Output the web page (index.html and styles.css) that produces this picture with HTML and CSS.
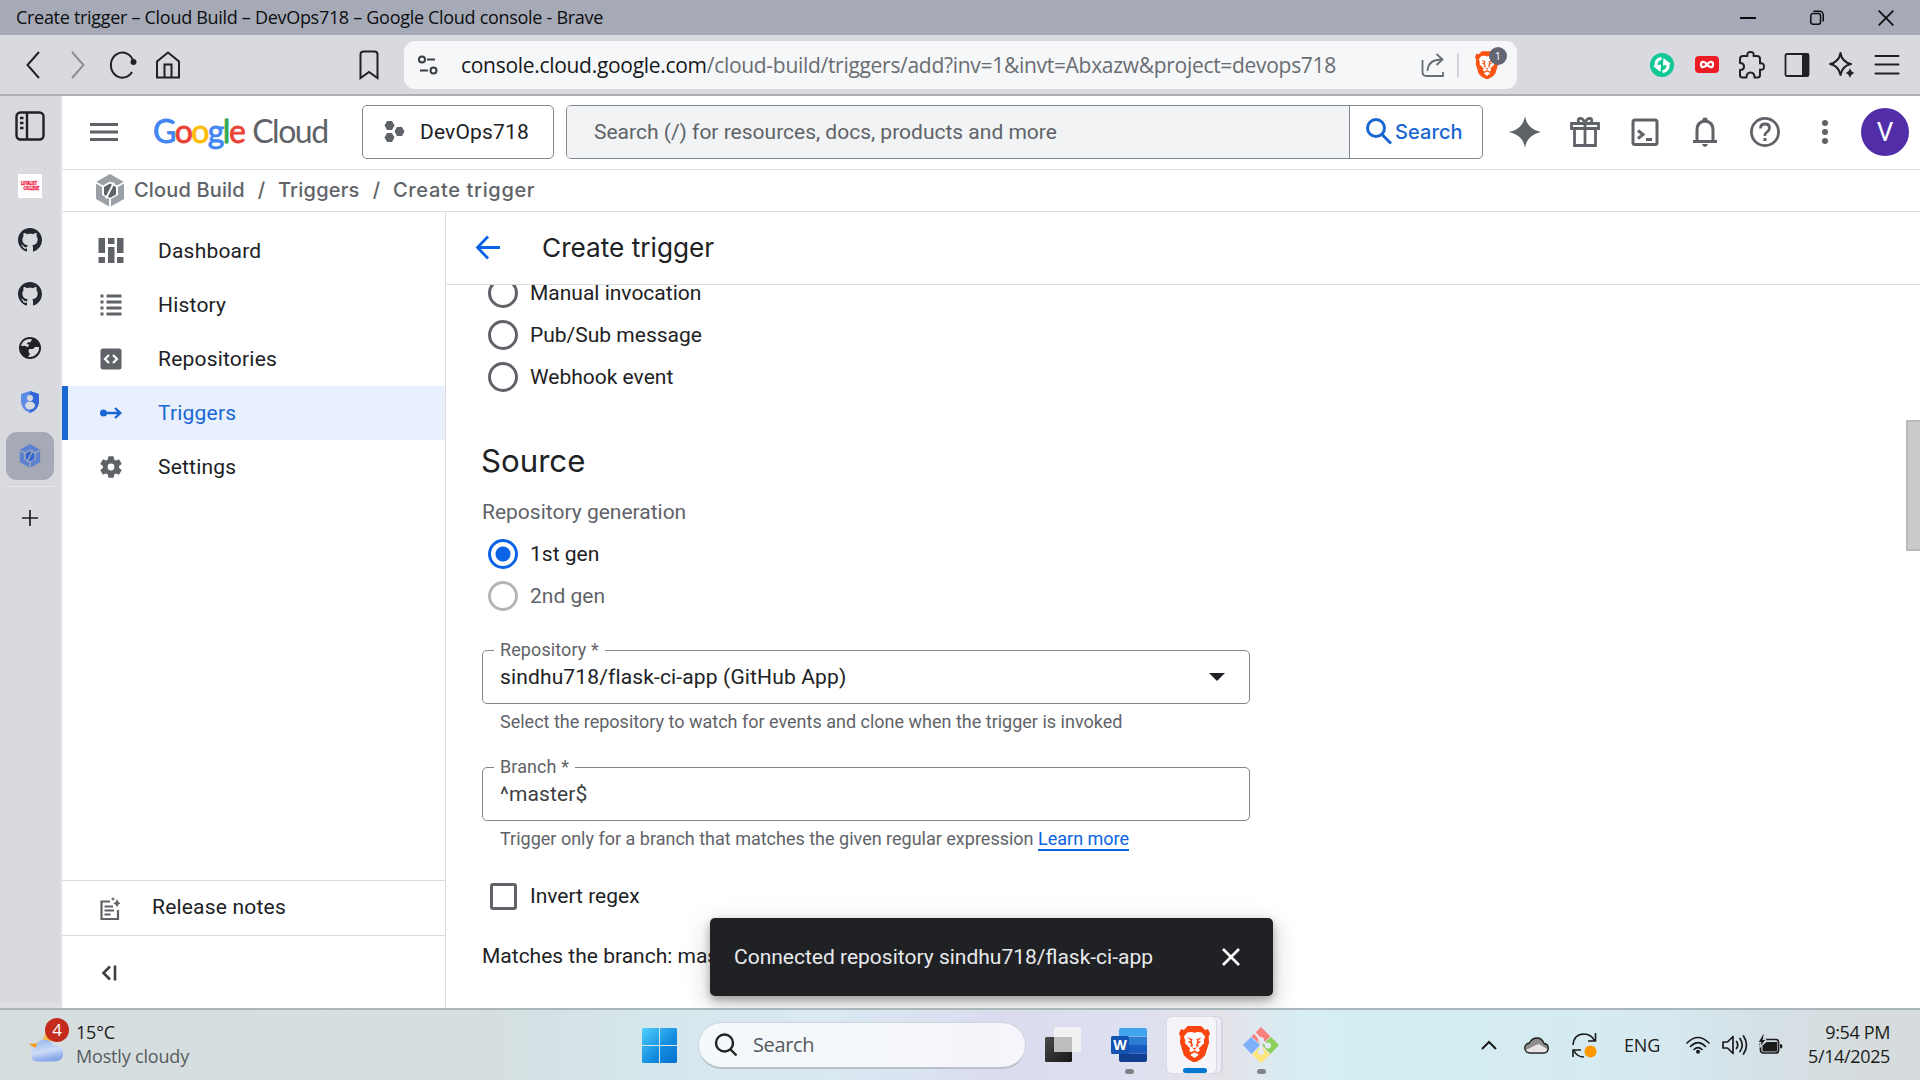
FILE: index.html
```html
<!DOCTYPE html>
<html lang="en">
<head>
<meta charset="utf-8">
<title>Create trigger – Cloud Build – DevOps718 – Google Cloud console</title>
<link rel="stylesheet" href="styles.css">
</head>
<body>
<svg class="defs" aria-hidden="true">
  <symbol id="lion" viewBox="0 0 32 37">
    <path d="M9 0h14l4 4 3-1 2 5-1.500 3 .5 6-4 13-4 4-7 4-7-4-4-4-4-13 .5-6L0 8l2-5 3 1z"/>
    <path fill="#fff" d="M16 7l3-1 4.500.5L27 11l-1.500 3.500.5 3-5.500 5.500 1 2.500-2 1.500-3.500-2-3.500 2-2-1.500 1-2.500L6 17.500l.5-3L5 11l3.500-4.500L13 6z"/>
    <path fill="currentColor" d="M8.500 11.500l5.500 2-.8 2.500 1.300 4.500-3 1 1-3-3.500-2.500 3.500-.5zM23.500 11.500l-5.500 2 .8 2.500-1.300 4.500 3 1-1-3 3.500-2.500-3.500-.5zM13 21.500l3 1.300 3-1.300-3 3.200z"/>
    <path fill="#fff" d="M16 27l4.500 2.500L16 33l-4.500-3.500z"/>
  </symbol>
  <symbol id="github" viewBox="0 0 16 16"><path d="M8 0C3.580 0 0 3.580 0 8c0 3.540 2.290 6.530 5.470 7.590.4.070.55-.17.55-.38 0-.19-.01-.82-.01-1.490-2.010.37-2.530-.49-2.690-.94-.09-.23-.48-.94-.82-1.130-.28-.15-.68-.52-.01-.53.63-.01 1.080.58 1.230.82.72 1.210 1.870.87 2.330.66.070-.52.28-.87.51-1.070-1.780-.2-3.640-.89-3.640-3.950 0-.87.31-1.590.82-2.150-.08-.2-.36-1.020.08-2.120 0 0 .67-.21 2.200.82.64-.18 1.320-.27 2-.27s1.360.09 2 .27c1.530-1.040 2.200-.82 2.200-.82.44 1.100.16 1.920.08 2.120.51.56.82 1.270.82 2.150 0 3.070-1.870 3.750-3.650 3.950.29.25.54.73.54 1.480 0 1.070-.01 1.930-.01 2.200 0 .21.15.46.55.38A8.010 8.010 0 0016 8c0-4.420-3.580-8-8-8z"/></symbol>
  <symbol id="build" viewBox="0 0 30 33">
    <path class="b-outer" d="M15 0l14 8v17l-14 8-14-8V8z"/>
    <path class="b-gap" d="M15 7.500l8 4.500v9l-8 4.500L7 21v-9z"/>
    <path class="b-inner" d="M15 9.500l6 3.500v7.500L15 24l-6-3.500V13z"/>
    <path class="b-line" fill="none" stroke-width="1.800" d="M0 8l8 4.500M30 8l-8 4.500M15 24v9M19 8.500l-8 16"/>
  </symbol>
</svg>

<header class="titlebar">
  <span class="titlebar-text">Create trigger – Cloud Build – DevOps718 – Google Cloud console - Brave</span>
  <svg class="win" viewBox="0 0 16 16"><path d="M0 8h16" stroke-width="2"/></svg>
  <svg class="win" viewBox="0 0 16 18"><rect x="1" y="4" width="11" height="12" rx="2.500"/><path d="M4 1.500h7a4 4 0 0 1 4 4V13"/></svg>
  <svg class="win" viewBox="0 0 16 16"><path d="M.7.7l14.600 14.600M15.300.7L.7 15.300"/></svg>
</header>

<div class="toolbar">
  <svg class="tb" viewBox="0 0 28 28"><path d="M20 1L8.500 14 20 27"/></svg>
  <svg class="tb tb-dim" viewBox="0 0 28 28"><path d="M8 1l11.500 13L8 27"/></svg>
  <svg class="tb" viewBox="0 0 28 28"><path d="M23 21A11.500 12.500 0 1 1 24.500 11"/><circle cx="24.500" cy="11" r="3" fill="#1f2126" stroke="none"/></svg>
  <svg class="tb" viewBox="0 0 28 28"><path d="M3 26.500V10.500L14 1.500l11 9v16zM10.500 26V13.500h7V26"/></svg>
  <svg class="tb tb-bookmark" viewBox="0 0 28 28"><path d="M5.500 3.500q0-3 3-3h11q3 0 3 3V27L14 21 5.500 27z"/></svg>
  <div class="urlbar">
    <svg class="tune" viewBox="0 0 20 20"><circle cx="4" cy="4.500" r="3"/><path d="M9 4.500h8M2 15.500h8"/><circle cx="15.500" cy="15.500" r="3"/></svg>
    <span class="url"><b>console.cloud.google.com</b>/cloud-build/triggers/add?inv=1&amp;invt=Abxazw&amp;project=devops718</span>
    <svg class="share" viewBox="0 0 24 24"><path d="M1.500 7v12q0 4 4 4H22v-4M6.500 18Q7 6.500 21 6.500M15.500 1l6 5.500-6 5.500"/></svg>
    <span class="url-divider"></span>
    <span class="shield"><svg class="lion"><use href="#lion"/></svg><span class="shield-count">1</span></span>
  </div>
  <svg class="ext ext-first" viewBox="0 0 28 28"><circle cx="14" cy="14" r="12" fill="#11c795"/><path fill="none" stroke="#fff" stroke-width="3.200" d="M13.500 7.200Q7.500 8.500 8 14.500l.8 2M14.500 20.800q6-1.300 5.500-7.300l-.8-2"/><path fill="#fff" d="M5 15l8-1.500-.5 7.500zM23 13l-8 1.500.5-7.500z"/></svg>
  <svg class="ext" viewBox="0 0 28 28"><rect x="2" y="5" width="24" height="17" rx="4" fill="#ed1c24"/><path fill="none" stroke="#fff" stroke-width="2.300" d="M14 13.500c-2-3-6-4-6 0s4 3 6 0 6-4 6 0-4 3-6 0z"/></svg>
  <svg class="ext" viewBox="0 0 28 28"><path fill="none" stroke="#1f2126" stroke-width="2" stroke-linejoin="round" d="M2 8q0-3 3-3h4.500q-1-4 3-4t3 4H19q3 0 3 3v4.500q4-1 4 3t-4 3V24q0 2.500-2.500 2.500h-3q0-5-4-5t-4 5H4.500Q2 26.500 2 24v-5q4 0 4-3.500T2 12z"/></svg>
  <svg class="ext" viewBox="0 0 28 28"><rect x="2.500" y="3" width="23" height="22" rx="1.500" fill="none" stroke="#1f2126" stroke-width="1.800"/><path fill="#1f2126" d="M19 2.500h6.500V25.500H19z"/></svg>
  <svg class="ext" viewBox="0 0 28 28"><path fill="none" stroke="#1f2126" stroke-width="2" stroke-linejoin="round" d="M12.500 2q1.500 9 10.500 11-9 2-10.500 11Q11 15 2 13 11 11 12.500 2z"/><circle cx="22" cy="22" r="6" fill="#d9dadf"/><path fill="#1f2126" d="M22 17q1 4 4.500 5-3.500 1-4.500 5-1-4-4.500-5 3.500-1 4.500-5z"/></svg>
  <svg class="ext" viewBox="0 0 28 28"><path stroke="#1f2126" stroke-width="2" stroke-linecap="round" d="M2.500 5h23M2.500 13.500h23M2.500 22.500h23"/></svg>
</div>

<div class="browser">
  <aside class="tabstrip">
    <svg class="panel-ic" viewBox="0 0 30 30"><rect x="1.500" y="1.500" width="27" height="27" rx="4"/><path d="M12 2v26M5 7h3.500M5 12h3.500M5 17h3.500"/></svg>
    <span class="tab"><svg class="t24" viewBox="0 0 24 24"><path fill="#fff" d="M0 0h24v24H0z"/><g fill="#ee2347" stroke="#ee2347" stroke-width=".3" font-family="Roboto, sans-serif" font-weight="900" font-size="5.800"><text x="3" y="11" textLength="16" lengthAdjust="spacingAndGlyphs">LOYALIST</text><text x="5.500" y="15.500" textLength="15.500" lengthAdjust="spacingAndGlyphs">COLLEGE</text></g></svg></span>
    <span class="tab"><svg class="t24 dark"><use href="#github"/></svg></span>
    <span class="tab"><svg class="t24 dark"><use href="#github"/></svg></span>
    <span class="tab"><svg class="t22" viewBox="0 0 22 22"><circle cx="11" cy="11" r="11" fill="#1f2126"/><path fill="#d9dadf" d="M2 9C3 5 6 2 11 2l2 .3-1.500 3H9l-1.500 2H10l-1 3-3-1.500zM10 12h4l2-2h4q.5 4-3 7.500-3 3-8 2.500l2-3-1.500-2z"/></svg></span>
    <span class="tab"><svg class="t22" viewBox="0 0 22 22"><path fill="#5c8be8" d="M11 0l9 3v8q-1 8-9 11-8-3-9-11V3z"/><path fill="#3367d6" d="M11 0l9 3v8q-1 8-9 11z"/><circle cx="11" cy="7" r="3" fill="#d9dadf"/><ellipse cx="11" cy="14.500" rx="5" ry="4" fill="#d9dadf"/></svg></span>
    <span class="tab tab-active"><svg class="build build-blue"><use href="#build"/></svg></span>
    <span class="tab-rule"></span>
    <svg class="plus" viewBox="0 0 16 16"><path d="M8 0v16M0 8h16"/></svg>
  </aside>

  <div class="console">
    <div class="topbar">
      <svg class="burger" viewBox="0 0 28 18"><path d="M0 1.500h28M0 9h28M0 16.500h28"/></svg>
      <div class="logo"><span class="g1">G</span><span class="g2">o</span><span class="g3">o</span><span class="g1">g</span><span class="g4">l</span><span class="g2">e</span><span class="cloud">Cloud</span></div>
      <div class="project"><svg viewBox="0 0 21 22"><path d="M3 0h5l2.500 4.500L8 9H3L.5 4.500zM3 12h5l2.500 4.500L8 21H3L.5 16.500zM13 6h5l2.500 4.500L18 15h-5l-2.500-4.500z"/></svg><span>DevOps718</span></div>
      <div class="search">
        <div class="search-input">Search (/) for resources, docs, products and more</div>
        <div class="search-btn"><svg viewBox="0 0 26 27"><circle cx="10" cy="10" r="8.500"/><path d="M16 16.500l9 9"/></svg><span>Search</span></div>
      </div>
      <div class="actions">
        <svg viewBox="0 0 30 30"><path fill="#5f6368" d="M15-1q2 13 16 16-14 3-16 16-2-13-16-16 14-3 16-16z"/></svg>
        <svg class="ln" viewBox="0 0 30 30"><path d="M1.500 6.500h27v5h-27zM4.500 11.500V28.500h21V11.500M15 6v22M15 6C12-1 6 1 9 6M15 6c3-7 9-5 6 0" stroke-width="2.800"/></svg>
        <svg class="ln" viewBox="0 0 30 30"><rect x="3" y="3" width="24" height="24.500" rx="2" stroke-width="3"/><path d="M8 13.500l5 4-5 4M16 22.500h6" stroke-width="3"/></svg>
        <svg class="ln" viewBox="0 0 30 30"><path d="M3 24.500h24M7 24V13q0-8 8-9 8 1 8 9v11" stroke-width="3"/><path fill="#5f6368" stroke="none" d="M12 27h6q-1 3-3 3t-3-3zM12.500 1.500q2.500-2 5 0V4h-5z"/></svg>
        <svg class="ln" viewBox="0 0 30 30"><circle cx="15" cy="15" r="13.600" stroke-width="2.800"/><path d="M10.500 11.500q0-4.500 4.500-4.500t4.500 4q0 2-2.500 4t-2 4" stroke-width="2.800"/><path fill="#5f6368" stroke="none" d="M13.500 21h3v3h-3z"/></svg>
        <svg viewBox="0 0 30 30"><g fill="#5f6368"><circle cx="15" cy="6" r="3"/><circle cx="15" cy="15" r="3"/><circle cx="15" cy="24" r="3"/></g></svg>
        <span class="avatar">V</span>
      </div>
    </div>

    <nav class="crumbs">
      <svg class="build build-grey"><use href="#build"/></svg>
      <span class="c1">Cloud Build</span><span class="sl">/</span><span class="c2">Triggers</span><span class="sl">/</span><span class="c3">Create trigger</span>
    </nav>

    <div class="work">
      <nav class="sidenav">
        <div class="items">
          <div class="item"><svg viewBox="0 0 26 26"><path d="M.5 0H7v15H.5zM10 0h6.500v6H10zM19 0h6.500v15H19zM.5 19H7v6H.5zM10 9h6.500v16H10zM19 19h6.500v6H19z"/></svg><span>Dashboard</span></div>
          <div class="item"><svg viewBox="0 0 26 26"><path d="M2.500 2.500h3v3h-3zM8.500 2.500h15v3h-15zM2.500 8.500h3v3h-3zM8.500 8.500h15v3h-15zM2.500 14.500h3v3h-3zM8.500 14.500h15v3h-15zM2.500 20.500h3v3h-3zM8.500 20.500h15v3h-15z"/></svg><span>History</span></div>
          <div class="item"><svg viewBox="0 0 26 26"><rect x="2.500" y="2.500" width="21" height="21" rx="2.500"/><path fill="none" stroke="#fff" stroke-width="2.200" d="M11 9l-4 4 4 4M15 9l4 4-4 4"/></svg><span>Repositories</span></div>
          <div class="item item-on"><svg viewBox="0 0 26 26"><circle cx="5.500" cy="13" r="3.500"/><path fill="none" stroke="#1967d2" stroke-width="2.400" d="M6 13h16M17 8l5.300 5L17 18"/></svg><span>Triggers</span></div>
          <div class="item"><svg viewBox="0.500 0.500 23 23"><path d="M19.140 12.940c.04-.3.060-.61.060-.94 0-.32-.02-.64-.07-.94l2.030-1.580c.18-.14.23-.41.12-.61l-1.920-3.320c-.12-.22-.37-.29-.59-.22l-2.390.96c-.5-.38-1.030-.7-1.620-.94l-.36-2.540c-.04-.24-.24-.41-.48-.41h-3.840c-.24 0-.43.17-.47.41l-.36 2.540c-.59.24-1.130.57-1.620.94l-2.390-.96c-.22-.08-.47 0-.59.22L2.740 8.870c-.12.21-.08.47.12.61l2.030 1.580c-.05.3-.09.63-.09.94s.02.64.07.94l-2.030 1.580c-.18.14-.23.41-.12.61l1.920 3.320c.12.22.37.29.59.22l2.390-.96c.5.38 1.030.7 1.620.94l.36 2.540c.05.24.24.41.48.41h3.840c.24 0 .44-.17.47-.41l.36-2.540c.59-.24 1.130-.56 1.620-.94l2.390.96c.22.08.47 0 .59-.22l1.920-3.320c.12-.22.070-.47-.12-.61l-2.010-1.580zM12 15a3 3 0 1 1 0-6 3 3 0 0 1 0 6z"/></svg><span>Settings</span></div>
        </div>
        <div class="notes"><svg viewBox="0 0 24 24"><path fill="none" stroke="#5f6368" stroke-width="2.200" d="M12 4.500H3.500V22H20V13M6.500 9.500H15M6.500 13.500H16M6.500 17.500h6"/><path d="M19 2q.8 3.400 3.500 4.200Q19.800 7 19 10.300q-.8-3.300-3.500-4.100Q18.200 5.400 19 2zM15 0q.4 1.600 2 2-1.600.4-2 2-.4-1.600-2-2 1.600-.4 2-2z"/></svg><span>Release notes</span></div>
        <div class="collapse"><svg viewBox="0 0 16 16"><path d="M9 1.500L2.500 8 9 14.500M14 .5v15"/></svg></div>
      </nav>

      <main class="main">
        <div class="page-head">
          <svg viewBox="0 0 24 24"><path d="M24 12H2M12 1L1.500 12 12 23"/></svg>
          <h1>Create trigger</h1>
        </div>
        <div class="form">
          <div class="radio first"><i></i><span>Manual invocation</span></div>
          <div class="radio"><i></i><span>Pub/Sub message</span></div>
          <div class="radio"><i></i><span>Webhook event</span></div>
          <h2>Source</h2>
          <div class="group-label">Repository generation</div>
          <div class="radio"><i class="on"></i><span>1st gen</span></div>
          <div class="radio off"><i></i><span>2nd gen</span></div>
          <div class="field"><label>Repository *</label><span class="repo">sindhu718/flask-ci-app (GitHub App)</span><svg viewBox="0 0 16 8"><path d="M0 0h16L8 8z"/></svg></div>
          <p class="hint">Select the repository to watch for events and clone when the trigger is invoked</p>
          <div class="field"><label>Branch *</label><span class="branch">^master$</span></div>
          <p class="hint">Trigger only for a branch that matches the given regular expression <a>Learn more</a></p>
          <div class="check"><i></i><span>Invert regex</span></div>
          <div class="match">Matches the branch: master</div>
        </div>
        <div class="scroll-thumb"></div>
        <div class="toast"><span>Connected repository sindhu718/flask-ci-app</span><svg viewBox="0 0 18 18"><path d="M1 1l16 16M17 1L1 17"/></svg></div>
      </main>
    </div>
  </div>
</div>

<footer class="taskbar">
  <div class="weather">
    <div class="weather-ic">
      <svg viewBox="0 0 38 36"><defs><linearGradient id="cl" x1="0" y1="0" x2=".3" y2="1"><stop offset="0" stop-color="#93b2ee"/><stop offset=".6" stop-color="#cddcf8"/><stop offset="1" stop-color="#86a6e8"/></linearGradient></defs><path fill="#f09a1c" d="M17 0q3 17-17 16Q5 22 12 20L24 12z"/><path fill="#f7bb45" d="M17 0q1 9-4 13l8 1z"/><path fill="url(#cl)" d="M8 35a7.500 7.500 0 0 1-1-14.500q1-8 9-8.500 7 0 10 5.500 10 0 10 9 0 8-8 8.500z"/></svg>
      <span class="badge">4</span>
    </div>
    <div class="weather-text"><span>15°C</span><span class="dim">Mostly cloudy</span></div>
  </div>
  <svg class="start" viewBox="0 0 35 35"><defs><linearGradient id="w" x1="0" y1="0" x2="1" y2="1"><stop offset="0" stop-color="#4fd0fb"/><stop offset=".6" stop-color="#128ade"/><stop offset="1" stop-color="#0571cf"/></linearGradient></defs><path fill="url(#w)" d="M1 0h16v17H0V1zM18 0h16l1 1v16H18zM0 18h17v17H1l-1-1zM18 18h17v16l-1 1H18z"/></svg>
  <div class="tsearch"><svg viewBox="0 0 24 24"><circle cx="10.500" cy="10" r="8.500"/><path d="M16.500 16.500l6 6"/></svg><span>Search</span></div>
  <svg class="taskview" viewBox="0 0 36 36"><defs><linearGradient id="tv" x1="0" y1="0" x2="1" y2="1"><stop offset="0" stop-color="#4a4a4a"/><stop offset="1" stop-color="#161616"/></linearGradient></defs><rect y="10" width="27" height="25" rx="1.500" fill="url(#tv)"/><rect x="9" width="27" height="25" rx="1.500" fill="#f1f1f1"/><path fill="#bdbdbd" d="M9 10h18v15H9z"/></svg>
  <div class="app"><svg class="word" viewBox="0 0 36 36"><path fill="#41a5ee" d="M8 3q0-2 2-2h24q2 0 2 2v6H8z"/><path fill="#2b7cd3" d="M8 9.500h28v8.500H8z"/><path fill="#185abd" d="M8 18h28v8.500H8z"/><path fill="#103f91" d="M8 26.500h28V33q0 2-2 2H10q-2 0-2-2z"/><rect y="9" width="18" height="18" rx="1.500" fill="#1553b3"/><text x="9" y="23" text-anchor="middle" font-family="Open Sans, sans-serif" font-weight="700" font-size="14" fill="#fff">W</text></svg><i class="dot"></i></div>
  <div class="app app-on"><svg class="lion2"><use href="#lion"/></svg><i class="bar"></i></div>
  <div class="app app-git"><svg viewBox="0 0 36 36"><path fill="#f97f7f" d="M18 0l9.500 9.500L18 18 8.500 9.500z"/><path fill="#7eb0fb" d="M8 10l9 8-8.500 9L0 18z"/><path fill="#8bd05c" d="M28 10l8 8-8.500 9L19 18z"/><path fill="#ffe57d" d="M18 19l9 8.500-9 8.500-9-8.500z"/><path stroke="#e4eaf2" stroke-width="2.500" fill="none" d="M11 5l7 8v13M18 13l7 6"/><g fill="#e4eaf2"><circle cx="18" cy="13" r="3"/><circle cx="18" cy="25" r="3"/><circle cx="25" cy="18.500" r="3"/></g></svg><i class="dot"></i></div>
  <div class="tray">
    <svg class="chev" viewBox="0 0 16 9"><path d="M1 8l7-7 7 7"/></svg>
    <svg class="onedrive" viewBox="0 0 25 17"><path fill="#8d8d8d" stroke="#1b1b1b" stroke-width="1.300" d="M6 16a5 5 0 0 1-.5-10Q8 1 13 1t7 5.500q4.300.5 4.300 4.800T20 16z"/><path fill="#e6e4e4" d="M2 13l10-5 3-1 8 5q0 3-3 3.300H6q-3 0-4-2.300z"/></svg>
    <svg class="sync" viewBox="0 0 25 25"><path fill="none" stroke="#1b1b1b" stroke-width="1.600" d="M1 12Q2 1 12 1q7 0 11 7M23.500 0v8H16M12 24Q5 24 1.500 17M1 24v-7h8"/><circle cx="18.500" cy="18.500" r="6" fill="#ff9800"/></svg>
    <span class="lang">ENG</span>
    <svg class="wifi" viewBox="0 0 24 18"><path fill="none" stroke="#1b1b1b" stroke-width="1.700" stroke-linecap="round" d="M1 7q11-11 22 0M4.500 10.500q7.500-7.500 15 0M8 13.500q4-4 8 0"/><circle cx="12" cy="15.800" r="2"/></svg>
    <svg class="vol" viewBox="0 0 25 20"><path fill="none" stroke="#1b1b1b" stroke-width="1.700" stroke-linejoin="round" stroke-linecap="round" d="M1 7h4.500L11 1.500v17L5.500 13H1zM14.500 6.500q2.500 3.500 0 7M18 3.500q4.500 6.500 0 13M21.500 1q6 9 0 18"/></svg>
    <svg class="bat" viewBox="0 0 25 19"><rect x="2.500" y="3.500" width="18" height="13.500" rx="2.500" fill="none" stroke="#1b1b1b" stroke-width="1.700"/><path d="M4.500 9.500l4-3.500h10.500v9.500H4.500zM22 8q2.500 0 2.500 2.200T22 12.500z"/><path stroke="#d6dfe4" stroke-width="1" d="M5-2l-5 8.500h3l-1 5 6-8H5L6.500-2z"/></svg>
    <div class="clock"><span>9:54 PM</span><span>5/14/2025</span></div>
  </div>
</footer>
</body>
</html>
```
FILE: styles.css
```css
* { box-sizing: border-box; }
body {
  margin: 0;
  width: 1920px;
  height: 1080px;
  overflow: hidden;
  display: flex;
  flex-direction: column;
  background: #fff;
  font-family: Roboto, "Liberation Sans", sans-serif;
  font-size: 21px;
  color: #202124;
}
svg { display: block; flex: none; overflow: visible; }
span { white-space: nowrap; }
.defs { width: 0; height: 0; position: absolute; }

/* window title */
.titlebar {
  height: 35px;
  flex: none;
  display: flex;
  align-items: center;
  gap: 53px;
  padding: 0 26px 0 16px;
  background: #a6aab6;
}
.titlebar-text {
  flex: 1;
  padding-bottom: 1px;
  font: 18px "Open Sans", sans-serif;
  letter-spacing: -0.3px;
  color: #0c0d10;
}
.win { width: 16px; height: 16px; fill: none; stroke: #0c0d10; stroke-width: 1.7; }

/* browser toolbar */
.toolbar {
  height: 61px;
  flex: none;
  display: flex;
  align-items: center;
  padding-left: 19px;
  background: #d9dadf;
  border-bottom: 2px solid #adafb5;
}
.tb { width: 28px; height: 28px; margin-right: 17px; fill: none; stroke: #1f2126; stroke-width: 2; }
.tb-dim { stroke: #8c8e94; }
.tb-bookmark { margin: 0 21px 0 156px; }
.urlbar {
  width: 1113px;
  height: 48px;
  display: flex;
  align-items: center;
  background: #f5f7f9;
  border-radius: 11px;
}
.tune { width: 20px; height: 20px; margin: 0 23px 0 14px; fill: none; stroke: #3a3d42; stroke-width: 2; }
.url {
  width: 956px;
  font: 21px "Open Sans", sans-serif;
  letter-spacing: -0.298px;
  color: #696c71;
}
.url b { font-weight: 400; color: #15171a; }
.share { width: 24px; height: 24px; margin-left: 4px; fill: none; stroke: #696c71; stroke-width: 1.8; }
.url-divider { width: 2px; height: 24px; margin: 0 16px 0 12px; background: #d2d4d9; }
.shield { position: relative; }
.lion { width: 24px; height: 28px; fill: #fb5313; color: #fb5313; }
.shield-count {
  position: absolute;
  left: 14px;
  top: -4px;
  width: 18px;
  height: 18px;
  border-radius: 9px;
  background: #636573;
  color: #fff;
  font: 11px/18px "Open Sans", sans-serif;
  text-align: center;
}
.ext { width: 28px; height: 28px; margin-right: 17px; }
.ext-first { margin-left: 131px; }

.browser { flex: 1; min-height: 0; display: flex; }

/* vertical tab strip */
.tabstrip {
  width: 62px;
  flex: none;
  display: flex;
  flex-direction: column;
  align-items: center;
  padding-top: 15px;
  background: #d9dadf;
  border-right: 2px solid #dfe0e6;
  border-bottom: 6px solid #dfe0e6;
}
.panel-ic { width: 30px; height: 30px; margin-bottom: 18px; fill: none; stroke: #1f2126; stroke-width: 2.4; }
.tab {
  width: 48px;
  height: 48px;
  margin: 3px 0;
  display: flex;
  align-items: center;
  justify-content: center;
  border-radius: 11px;
}
.tab-active { background: #a6aab6; }
.t24 { width: 24px; height: 24px; }
.t22 { width: 22px; height: 22px; }
.dark { fill: #24292f; }
.build-blue { width: 22px; height: 24px; --outer: #5c82cf; --gap: #a6aab6; --inner: #3367d6; }
.build-grey { width: 30px; height: 33px; --outer: #9aa0a6; --gap: #fff; --inner: #5f6368; }
.b-outer { fill: var(--outer); }
.b-gap { fill: var(--gap); }
.b-inner { fill: var(--inner); }
.b-line { stroke: var(--gap); }
.tab-rule { width: 48px; height: 1px; margin: 3px 0 23px; background: #e8e9ee; }
.plus { width: 16px; height: 16px; stroke: #1f2126; stroke-width: 1.7; }

/* console */
.console { flex: 1; min-width: 0; display: flex; flex-direction: column; }
.topbar {
  height: 74px;
  flex: none;
  display: flex;
  align-items: center;
  padding: 0 0 2px 28px;
  border-bottom: 1px solid #dadce0;
}
.burger { width: 28px; height: 18px; margin-right: 35px; stroke: #5f6368; stroke-width: 3; }
.logo {
  width: 209px;
  padding-bottom: 2px;
  font: 32px/40px Lato, sans-serif;
  letter-spacing: -1.55px;
}
.g1 { color: #4285f4; -webkit-text-stroke: 0.8px #4285f4; }
.g2 { color: #ea4335; -webkit-text-stroke: 0.8px #ea4335; }
.g3 { color: #fbbc04; -webkit-text-stroke: 0.8px #fbbc04; }
.g4 { color: #34a853; -webkit-text-stroke: 0.8px #34a853; }
.cloud { margin-left: 8px; color: #5f6368; letter-spacing: -1.5px; }
.project {
  width: 192px;
  height: 54px;
  display: flex;
  align-items: center;
  gap: 15px;
  padding-left: 21px;
  margin-right: 12px;
  border: 1px solid #80868b;
  border-radius: 5px;
  letter-spacing: 0.17px;
}
.project svg { width: 21px; height: 22px; fill: #5f6368; }
.search {
  width: 917px;
  height: 54px;
  display: flex;
  border: 1px solid #80868b;
  border-radius: 5px;
  overflow: hidden;
}
.search-input { width: 783px; line-height: 52px; padding-left: 27px; background: #f1f3f4; color: #5f6368; border-right: 1px solid #80868b; }
.search-btn { display: flex; align-items: center; gap: 3px; padding-left: 16px; color: #1967d2; font-weight: 500; font-family: Inter, sans-serif; font-size: 20px; letter-spacing: 0.1px; }
.search-btn svg { width: 26px; height: 27px; fill: none; stroke: #1967d2; stroke-width: 3; }
.actions { display: flex; align-items: center; gap: 30px; margin-left: 27px; }
.actions svg { width: 30px; height: 30px; }
.ln { fill: none; stroke: #5f6368; }
.avatar {
  width: 48px;
  height: 48px;
  margin-left: -9px;
  border-radius: 24px;
  background: #512da8;
  color: #fff;
  font-size: 26px;
  line-height: 48px;
  text-align: center;
}
.crumbs {
  height: 42px;
  flex: none;
  display: flex;
  align-items: center;
  padding: 0 0 1px 33px;
  border-bottom: 1px solid #dadce0;
  font: 450 20px Inter, sans-serif;
  color: #5f6368;
}
.c1 { width: 111px; margin-left: 9px; letter-spacing: 0.15px; }
.c2 { width: 82px; letter-spacing: 0.2px; }
.sl { width: 33px; text-align: center; }
.c3 { letter-spacing: 0.65px; }

.work { flex: 1; min-height: 0; display: flex; }
.sidenav {
  width: 384px;
  flex: none;
  display: flex;
  flex-direction: column;
  border-right: 1px solid #dadce0;
  letter-spacing: 0.2px;
}
.items { flex: 1; padding-top: 12px; }
.item { height: 54px; display: flex; align-items: center; gap: 34px; padding-left: 36px; }
.item svg { width: 26px; height: 26px; fill: #5f6368; }
.item-on { background: #e8f0fe; color: #1967d2; border-left: 6px solid #1967d2; padding-left: 30px; }
.item-on svg { fill: #1967d2; }
.notes { height: 55px; display: flex; align-items: center; gap: 30px; padding: 0 0 2px 36px; border-top: 1px solid #dadce0; }
.notes svg { width: 24px; height: 24px; fill: #5f6368; margin-top: 3px; }
.collapse { height: 73px; display: flex; align-items: center; padding: 1px 0 0 39px; border-top: 1px solid #dadce0; }
.collapse svg { width: 16px; height: 16px; fill: none; stroke: #3c4043; stroke-width: 2.6; }

.main { flex: 1; min-width: 0; display: flex; flex-direction: column; position: relative; }
.page-head { height: 73px; flex: none; display: flex; align-items: center; padding: 0 0 2px 30px; gap: 42px; border-bottom: 1px solid #dadce0; }
.page-head svg { width: 24px; height: 27px; fill: none; stroke: #0b63e5; stroke-width: 2.8; }
h1 { margin: 0; font: 26.2px Inter, sans-serif; }
.form { flex: 1; min-height: 0; overflow: hidden; padding-left: 36px; }
.radio { height: 42px; display: flex; align-items: center; gap: 12px; padding-left: 6px; }
.radio.first { margin-top: -13px; }
.radio i { width: 30px; height: 30px; border: 3px solid #5f6368; border-radius: 50%; }
.radio .on { border-color: #0b63e5; background: radial-gradient(circle, #0b63e5 7px, transparent 8px); }
.radio.off { color: #5f6368; }
.radio.off i { border-color: #b4b5b7; }
h2 { margin: 43px 0 16px; font: 31.2px/40px Inter, sans-serif; text-indent: -1px; }
.group-label { height: 30px; line-height: 30px; margin-bottom: 6px; color: #5f6368; }
.field {
  position: relative;
  width: 768px;
  height: 54px;
  margin-top: 33px;
  display: flex;
  align-items: center;
  justify-content: space-between;
  padding: 0 24px 0 17px;
  border: 1px solid #80868b;
  border-radius: 5px;
}
.field label {
  position: absolute;
  left: 11px;
  top: -12px;
  padding: 0 6px;
  background: #fff;
  font-size: 18px;
  line-height: 22px;
  letter-spacing: 0.1px;
  color: #5f6368;
}
.field svg { width: 16px; height: 8px; fill: #202124; }
.repo { letter-spacing: 0.14px; }
.branch { color: #3c4043; letter-spacing: 0.14px; }
.hint { margin: 6px 0 0 18px; font-size: 18px; line-height: 24px; color: #5f6368; }
.hint a { color: #0b63e5; border-bottom: 2px solid #0b63e5; }
.check { height: 42px; margin-top: 24px; display: flex; align-items: center; gap: 13px; padding-left: 8px; }
.check i { width: 27px; height: 27px; border: 3px solid #5f6368; border-radius: 3px; }
.match { height: 30px; line-height: 30px; margin-top: 24px; }
.scroll-thumb { position: absolute; right: 0; top: 208px; width: 14px; height: 131px; background: #cbcbcb; border: 2px solid #bababa; border-right: 0; }
.toast {
  position: absolute;
  left: 264px;
  top: 706px;
  width: 563px;
  height: 78px;
  display: flex;
  align-items: center;
  justify-content: space-between;
  padding: 0 33px 0 24px;
  border-radius: 5px;
  background: #202124;
  color: #e8eaed;
  box-shadow: 0 4px 8px rgba(0,0,0,.3), 0 8px 24px 4px rgba(0,0,0,.14);
}
.toast svg { width: 18px; height: 18px; fill: none; stroke: #fff; stroke-width: 2.6; }

/* taskbar */
.taskbar {
  height: 72px;
  flex: none;
  position: relative;
  display: flex;
  align-items: center;
  border-top: 2px solid #a9b6ba;
  background: linear-gradient(90deg, #d6dddf 0, #d5dfe1 500px, #d5e7ed 660px, #dae8f2 840px, #dadcee 1000px, #dde0f0 1130px, #e5e2e9 1220px, #d6eef4 1300px, #d3edf2 1440px, #d6e9f1 1650px, #d5e1e7 1760px, #d6dcdd 1860px);
  font: 18px "Open Sans", sans-serif;
  color: #1b1b1b;
}
.weather { width: 642px; display: flex; align-items: center; gap: 10px; padding-left: 28px; }
.weather-ic { position: relative; padding: 0 1px; }
.weather-ic svg { width: 36px; height: 35px; }
.badge {
  position: absolute;
  left: 17px;
  top: -10px;
  width: 24px;
  height: 24px;
  border-radius: 12px;
  background: #c42b1c;
  color: #fff;
  font-size: 17px;
  line-height: 24px;
  text-align: center;
}
.weather-text { display: flex; flex-direction: column; line-height: 24px; letter-spacing: -0.18px; padding-bottom: 3px; }
.dim { color: #585c5f; }
.start { width: 35px; height: 35px; margin-right: 21px; }
.tsearch {
  width: 328px;
  height: 47px;
  display: flex;
  align-items: center;
  gap: 15px;
  padding-left: 15px;
  margin-right: 19px;
  border: 1px solid #cdd6df;
  border-bottom: 2px solid #b9c1cb;
  border-radius: 24px;
  background: linear-gradient(90deg, #f4f9fb, #f5f5fb);
  color: #55585c;
  font-size: 20px;
  letter-spacing: -0.38px;
}
.tsearch svg { width: 24px; height: 24px; fill: none; stroke: #222; stroke-width: 2.4; }
.taskview { width: 36px; height: 36px; margin-right: 30px; }
.app { position: relative; height: 58px; display: flex; align-items: center; justify-content: center; }
.app svg { width: 36px; height: 36px; }
.app .lion2 { width: 31px; height: 36px; fill: #fb4511; color: #fb4511; }
.app-on { width: 51px; margin: 0 26px 0 19px; padding: 0 0 2px 6px; border-radius: 6px; background: #f4f4f9; border: 1px solid #d8d9e2; box-shadow: 5px 0 0 -1px #ececf2, 6px 0 0 0 #d5d6df; }
.dot { position: absolute; left: 50%; bottom: 0; width: 9px; height: 5px; margin-left: -4px; border-radius: 3px; background: #7f8388; }
.bar { position: absolute; left: 50%; bottom: 0; width: 24px; height: 5px; margin-left: -9px; border-radius: 3px; background: #0078d4; }
.tray { flex: 1; display: flex; align-items: center; padding: 0 30px 0 202px; }
.tray svg { fill: #1b1b1b; }
.chev { width: 16px; height: 9px; margin-right: 27px; stroke: #1b1b1b; stroke-width: 2; }
.tray .chev { fill: none; }
.onedrive { width: 25px; height: 17px; margin-right: 23px; }
.sync { width: 25px; height: 25px; margin-right: 27px; }
.lang { width: 62px; padding-bottom: 1px; letter-spacing: -0.2px; }
.wifi { width: 24px; height: 18px; margin-right: 12px; }
.vol { width: 25px; height: 20px; margin-right: 11px; }
.bat { width: 25px; height: 19px; }
.clock { flex: 1; display: flex; flex-direction: column; align-items: flex-end; line-height: 24px; letter-spacing: -0.36px; padding-bottom: 3px; }
```
